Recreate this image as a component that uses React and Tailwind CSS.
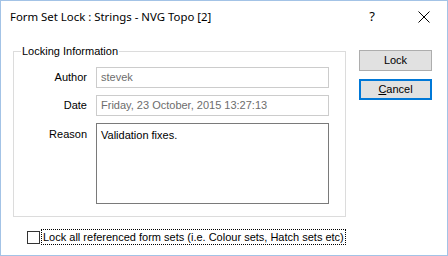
export default function App() {
  const body = { fontFamily: '"Liberation Sans", Arial, sans-serif' };
  const title = { fontFamily: '"Noto Sans", "Segoe UI", sans-serif' };
  return (
    <div
      className="w-[448px] h-[256px] bg-white border border-[#a3c3e6] flex flex-col text-[11px] text-black overflow-hidden"
      style={body}
    >
      {/* Title bar */}
      <div className="h-[31px] flex items-center pl-[9px] shrink-0" style={title}>
        <span className="flex-1 leading-[16px] text-[11.4px]">Form Set Lock : Strings - NVG Topo [2]</span>
        <span className="w-[30px] text-center text-[13px] mr-[14px]">?</span>
        <span className="w-[46px] flex justify-center items-center">
          <svg width="12" height="12" viewBox="0 0 12 12">
            <path d="M0.5 0.5 L11.5 11.5 M11.5 0.5 L0.5 11.5" stroke="#000" strokeWidth="1" fill="none" />
          </svg>
        </span>
      </div>

      {/* Body */}
      <div className="flex pl-[12px] pt-[10px]">
        <fieldset className="w-[333px] h-[174px] border border-[#dcdcdc] px-0 pt-0 pb-[11px] m-0 mt-[1px]">
          <legend className="ml-[7px] px-[1px] leading-[16px]">Locking Information</legend>
          <div className="flex flex-col gap-[7px] mt-[8px]">
            <div className="flex items-center">
              <span className="w-[74px] text-right pr-[1px]">Author</span>
              <div className="ml-[8px] w-[233px] h-[21px] border border-[#cccccc] flex items-center pl-[4px] text-[#6d6d6d]">
                stevek
              </div>
            </div>
            <div className="flex items-center">
              <span className="w-[74px] text-right pr-[1px]">Date</span>
              <div className="ml-[8px] w-[233px] h-[21px] border border-[#cccccc] flex items-center pl-[4px] text-[#6d6d6d]">
                Friday, 23 October, 2015 13:27:13
              </div>
            </div>
            <div className="flex items-start">
              <span className="w-[74px] text-right pr-[1px] pt-[3px]">Reason</span>
              <div className="ml-[8px] w-[233px] h-[81px] border border-[#7a7a7a] pl-[4px] pt-[3px]">
                Validation fixes.
              </div>
            </div>
          </div>
        </fieldset>

        <div className="flex flex-col gap-[8px] ml-[13px] pt-[8px]">
          <button className="w-[73px] h-[21px] bg-[#e1e1e1] border border-[#adadad] flex items-center justify-center leading-none">
            Lock
          </button>
          <button className="w-[73px] h-[21px] bg-[#e1e1e1] border-2 border-[#0078d7] flex items-center justify-center leading-none">
            <span><span className="underline">C</span>ancel</span>
          </button>
        </div>
      </div>

      {/* Checkbox row */}
      <div className="flex items-center pl-[26px] mt-[12px]">
        <span className="w-[13px] h-[13px] border border-[#333333] bg-white shrink-0" />
        <span className="ml-[1px] px-[1px] border border-dotted border-black leading-[14px]">
          Lock all referenced form sets (i.e. Colour sets, Hatch sets etc)
        </span>
      </div>
    </div>
  );
}
